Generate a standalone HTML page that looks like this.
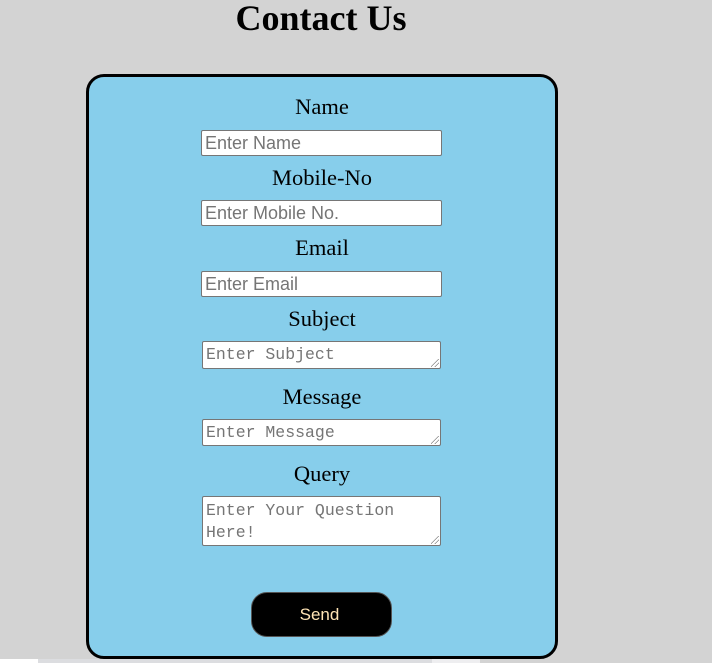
<!DOCTYPE html>
<html><head><meta charset="utf-8"><style>
*{box-sizing:border-box;margin:0;padding:0}
body{width:712px;height:663px;background:#d3d3d3;position:relative;overflow:hidden;font-family:"Liberation Serif",serif}
h1{position:absolute;left:0;width:642px;top:-3px;text-align:center;font-size:36px;font-weight:bold;color:#000}
.card{position:absolute;left:86px;top:74px;width:472px;height:585px;background:#87ceeb;border:3px solid #000;border-radius:18px}
.lbl{position:absolute;left:86px;width:472px;text-align:center;font-size:22.5px;color:#000;line-height:24px}
.in{position:absolute;left:201px;width:241px;height:26px;background:#fff;border:1px solid #767676;border-radius:2px;font-family:"Liberation Sans",sans-serif;font-size:18px;color:#757575;padding:2px 3px;line-height:20px}
.ta{position:absolute;left:202px;width:239px;background:#fff;border:1px solid #767676;border-radius:2px;font-family:"Liberation Mono","DejaVu Sans Mono",monospace;font-size:16.5px;color:#757575;padding:3px 3px;line-height:22px;white-space:pre}
.ta:after{content:"";position:absolute;right:1px;bottom:1px;width:8px;height:8px;background:linear-gradient(135deg,transparent 45%,#888 46%,#888 52%,transparent 53%,transparent 70%,#888 71%,#888 77%,transparent 78%)}
.btn{position:absolute;left:251px;top:592px;width:141px;height:45px;background:#000;border:1px solid #555;border-radius:16px;color:#ffe4b5;font-family:"Liberation Sans",sans-serif;font-size:17px;text-align:center;line-height:43px;padding-right:4px}
.strip{position:absolute;top:659px;height:4px}
</style></head><body>
<h1>Contact Us</h1>
<div class="card"></div>
<div class="lbl" style="top:95px">Name</div>
<div class="in" style="top:130px">Enter Name</div>
<div class="lbl" style="top:166px">Mobile-No</div>
<div class="in" style="top:200px">Enter Mobile No.</div>
<div class="lbl" style="top:236px">Email</div>
<div class="in" style="top:271px">Enter Email</div>
<div class="lbl" style="top:307px">Subject</div>
<div class="ta" style="top:341px;height:28px;line-height:20px">Enter Subject</div>
<div class="lbl" style="top:385px">Message</div>
<div class="ta" style="top:419px;height:27px;line-height:19px">Enter Message</div>
<div class="lbl" style="top:462px">Query</div>
<div class="ta" style="top:496px;height:50px">Enter Your Question
Here!</div>
<div class="btn">Send</div>
<div class="strip" style="left:0;width:38px;background:#fff"></div>
<div class="strip" style="left:38px;width:394px;background:#dcdde0"></div>
<div class="strip" style="left:432px;width:48px;background:#eeeef0"></div>
</body></html>
